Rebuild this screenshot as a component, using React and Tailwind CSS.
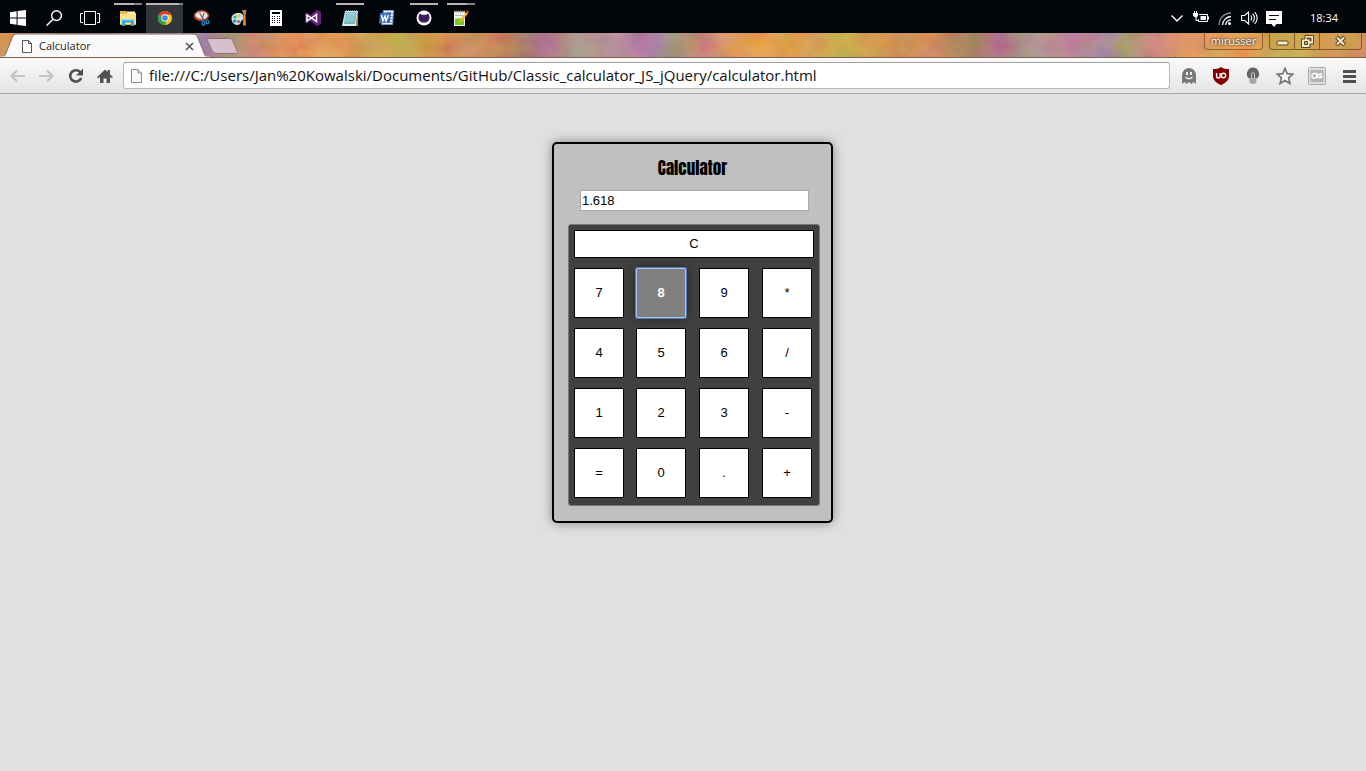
const ui = "font-['Open_Sans','Noto_Sans',sans-serif]";

const Svg = ({ w = 16, h = 16, children, className = '' }) => (
  <svg width={w} height={h} viewBox={`0 0 ${w} ${h}`} className={`shrink-0 ${className}`} aria-hidden="true">{children}</svg>
);

const StartIcon = () => (
  <Svg><path fill="#fff" d="M0 2.3 6.6 1.2V7.5H0zM7.6 1 16 0V7.5H7.6zM0 8.5h6.6v6.3L0 13.8zM7.6 8.5H16V16l-8.4-1.1z" /></Svg>
);
const SearchIcon = () => (
  <Svg><g fill="none" stroke="#fff" strokeWidth="1.4"><circle cx="10.5" cy="5.6" r="4.9" /><path d="M7 9.2.6 15.6" /></g></Svg>
);
const TaskViewIcon = () => (
  <Svg w={20}><g fill="none" stroke="#fff" strokeWidth="1"><path d="M4.500 1.500h11v13h-11zM3 3.500H.5v9H3M17 3.500h2.500v9H17" /></g></Svg>
);
const FolderIcon = () => (
  <Svg>
    <path fill="#e9b949" d="M0 1h6l1.500 2H16v12H0z" />
    <path fill="#fbe08a" d="M0 4h16v10H0z" />
    <path fill="#fdeeb4" d="M7 1.500h8V4H7z" />
    <path fill="#2fa8e0" d="M2 9h12v7h-3v-3.500H5.200V16H2z" />
    <path fill="#8bd8f8" d="M2 9h12v1.500H2z" />
  </Svg>
);
const ChromeIcon = () => (
  <Svg>
    <circle cx="8" cy="8" r="7" fill="#fbc916" />
    <path fill="#e33b2e" d="M8 8 1.900 4.500A7 7 0 0 1 14.200 4.800H8z" />
    <path fill="#2fa24c" d="M8 8 1.900 4.500A7 7 0 0 0 7.500 15L10.800 9.600z" />
    <circle cx="8" cy="8" r="3.700" fill="#f4f4f4" />
    <circle cx="8" cy="8" r="2.800" fill="#4485e8" />
  </Svg>
);
const SnipIcon = () => (
  <Svg>
    <ellipse cx="7.500" cy="5.500" rx="6.800" ry="4.500" fill="#f1eae6" stroke="#c4513a" strokeWidth="1.500" />
    <path d="M5.500 2.500 9.500 10M10 3 8 10" stroke="#666" strokeWidth="1.200" />
    <path d="M1 7q3 3.500 7 3" stroke="#b75236" strokeWidth="2" fill="none" />
    <g fill="none" stroke="#1f87c7" strokeWidth="1.300"><ellipse cx="9.500" cy="13" rx="1.400" ry="2.200" /><ellipse cx="13.400" cy="11.800" rx="1.400" ry="2" /></g>
  </Svg>
);
const PaintIcon = () => (
  <Svg>
    <path fill="#c6dff0" d="M.5 8.500C.5 4.500 4 3 7.500 3S13 5 12.500 8s-2 2-2.500 3.500S9 15 6 15 .5 12 .5 8.500" />
    <circle cx="4" cy="7" r="1.600" fill="#4db13f" /><circle cx="8" cy="5.600" r="1.500" fill="#f0c62c" />
    <circle cx="3.700" cy="11" r="1.600" fill="#2377c9" /><circle cx="7.500" cy="11.500" r="1.500" fill="#d9472b" />
    <path fill="#e9862b" d="M12.500 5h2l.5 10.500h-3z" /><path fill="#b98450" d="M11 0h4.500l-1 5h-2z" />
  </Svg>
);
const CalcIcon = () => (
  <Svg>
    <path fill="#fff" d="M2 0h12v16H2z" />
    <path fill="#05080d" d="M4 2h8v2H4z" />
    {[6, 8, 10, 12].map((y) => [4, 6, 9, 11].map((x) => <rect key={`${x}-${y}`} x={x} y={y} width="1" height="1" fill="#05080d" />))}
  </Svg>
);
const VisualStudioIcon = () => (
  <Svg>
    <path fill="#68217a" d="M11.500 0 16 1.800v12.400L11.500 16 5.500 11 1.800 13.500 0 12.500v-9l1.800-1L5.500 5z" />
    <path fill="none" stroke="#fff" strokeWidth="1.500" d="M2 5 11.500 11.500v-7L2 11z" />
  </Svg>
);
const NotepadIcon = () => (
  <Svg>
    <path fill="#d7eef1" d="M3 1h13l-2 15H0z" /><path fill="#76b9c6" d="M3.500 2h11l-1.500 12H2z" />
    <path fill="#a9dde4" d="M4 3h9l-1.500 9H3z" />
    <path stroke="#5e9dab" strokeWidth=".7" d="M4 5h8.500M3.700 7h8.500M3.400 9h8.500M3.100 11h8.500" />
    <path stroke="#777" d="M4 .5h11" strokeDasharray="1 1" /><path fill="#b08c48" d="M15 4h1v12h-2z" />
  </Svg>
);
const WordIcon = () => (
  <Svg>
    <path fill="#eaf1fb" stroke="#7f9ccc" d="M4.500.5h10l-1 14h-11z" />
    <path stroke="#6a8cc5" d="M11 3.500h3M11 6.500h3M11 9.500h3M7 12.500h6" />
    <path fill="#3d6db8" d="M1 3 12 2l-1 10.500-11 1z" />
    <path d="m2.500 5 1.300 6L6 6l1 5 2.500-6" fill="none" stroke="#fff" strokeWidth="1.400" />
  </Svg>
);
const GithubIcon = () => (
  <Svg>
    <circle cx="8" cy="8" r="7.500" fill="#fff" />
    <path fill="#3b1f5b" d="M3.500 3.500 6 4.800h4l2.500-1.300.8 2.700c.8 4-1.300 6.300-5.300 6.300S1.900 10.200 2.700 6.200z" />
  </Svg>
);
const NotepadPlusIcon = () => (
  <Svg>
    <path fill="#f4f4ee" d="M1 1.500h11V16H1z" /><path fill="#78c927" d="M2 9c3-1 5 0 9-2v8H2z" />
    <path stroke="#999" strokeWidth="2" strokeDasharray="1 1" d="M1 1.500h11" /><path stroke="#b7b7b7" d="M2 5.500h8" />
    <path fill="#f4b52c" d="m13 2 2 1.500-6.500 8L6.500 12.500l.5-2.500z" /><path fill="#d13b28" d="m14 0 2 1.500L15 4l-2-2z" />
  </Svg>
);

const pinned = [
  ['File Explorer', FolderIcon, 'split'],
  ['Google Chrome', ChromeIcon, 'active'],
  ['Snipping Tool', SnipIcon],
  ['Paint', PaintIcon],
  ['Windows Calculator', CalcIcon],
  ['Visual Studio', VisualStudioIcon],
  ['Notepad', NotepadIcon, 'open'],
  ['Word', WordIcon],
  ['GitHub', GithubIcon, 'open'],
  ['Notepad++', NotepadPlusIcon, 'split'],
];

function TaskButton({ name, Icon, state }) {
  return (
    <button aria-label={name} className={`flex h-[30px] w-[37px] flex-col items-center ${state === 'active' ? 'bg-[#32363a]' : ''}`}>
      <span className={`flex h-[2px] ${state === 'active' ? 'w-full' : 'w-7'} ${state ? 'bg-[#b9b5b0]' : ''}`}>
        {state === 'split' && <span className="ml-auto h-full w-2 bg-[#85827f]" />}
        {state === 'active' && <span className="ml-auto h-full w-1 bg-[#85827f]" />}
      </span>
      <span className="mt-[5px]"><Icon /></span>
    </button>
  );
}

function Taskbar() {
  return (
    <header className="flex h-[33px] items-end bg-[#020509]">
      {[['Start', StartIcon], ['Search', SearchIcon], ['Task View', TaskViewIcon]].map(([n, I]) => (
        <button key={n} aria-label={n} className="flex h-[30px] w-9 items-center justify-center"><I /></button>
      ))}
      <nav className="flex pl-px" aria-label="Applications">
        {pinned.map(([name, Icon, state]) => <TaskButton key={name} name={name} Icon={Icon} state={state} />)}
      </nav>
      <div className="ml-auto flex h-[30px] items-center gap-2 pr-7">
        <Svg className="mr-[2px]" w={12}><path d="m.5 5.500 5.500 5.500 5.500-5.500" fill="none" stroke="#fff" strokeWidth="1.400" /></Svg>
        <Svg><path fill="none" stroke="#fff" d="M6 4.500h8.500v7h-9V9" /><path fill="#fff" d="M7.500 6H13v4H7.500zM15 6.500h1v3h-1zM0 3h1V1h1v2h1V1h1v2h1v3L3.500 7.500V10h2v1h-3V7.500L0 6z" /></Svg>
        <Svg><g fill="none" strokeWidth="1.300"><path stroke="#8c8f91" d="M2 15A12 12 0 0 1 14 3" /><path stroke="#fff" d="M5.500 15A9 9 0 0 1 14 6.500M8.500 15A6 6 0 0 1 14 9.800" /></g><circle cx="12.500" cy="13.500" r="1.500" fill="#fff" /></Svg>
        <Svg w={17}><g fill="none" stroke="#fff" strokeWidth="1.100"><path d="M.6 5.500h3l4-3.500v12l-4-3.500h-3zM9.700 5.500q2 2.500 0 5M11.700 3.700q3.500 4.300 0 8.600M13.700 2q5 6 0 12" /></g></Svg>
        <Svg className="mt-px"><path fill="#fff" d="M0 0h16v13h-5.500L8 16l-2.500-3H0z" /><path stroke="#05080d" d="M3 4.500h10M3 8.500h7" /></Svg>
        <time className={`${ui} ml-5 text-[11px] text-white`}>18:34</time>
      </div>
    </header>
  );
}

function TabStrip() {
  return (
    <div className="relative flex h-[25px] items-start overflow-hidden border-b border-[#7a6048] bg-[repeating-linear-gradient(93deg,#cf8a4a_0px,#c97f4c_35px,#9f7250_70px,#a2648a_98px,#9a9382_125px,#b87f90_165px,#9d74a4_205px,#93906f_225px,#c07a72_250px,#e08f4c_285px,#e59a45_320px,#e3943f_345px,#c5a83c_380px,#bfa93a_395px,#cd8f38_425px,#cf8a4a_450px)]">
      <svg className="absolute inset-0 h-6 w-full opacity-30" aria-hidden="true">
        <filter id="grain" x="0" y="0" width="100%" height="100%">
          <feTurbulence type="fractalNoise" baseFrequency="0.035 0.045" numOctaves="5" seed="8" />
          <feColorMatrix values="1.4 0 0 0 0  0 1.2 0 0 -0.1  0 0 1.2 0 -0.2  0 0 0 0 0.7" />
        </filter>
        <rect width="100%" height="100%" filter="url(#grain)" />
      </svg>
      <div className="relative flex h-[25px] w-[208px] items-center">
        <svg className="absolute inset-0" width="240" height="25" viewBox="0 0 240 25" aria-hidden="true">
          <path d="M0 25v-1c4 0 5-1 6-4l6-15c1-3 2-4 5-4h175c4 0 5 1 6 4l6 15c1 3 2 4 6 5z" fill="#fafafa" stroke="#866a62" strokeWidth="1" />
          <path d="M0 24.500h209" stroke="#fafafa" strokeWidth="2" />
          <path d="M209 5.500h20c2 0 3 0 4 3l4 9c1 3 0 3-3 3h-17c-3 0-4-1-5-3l-4-9c-1-2-1-3 1-3z" fill="#d5c0cb" stroke="#927078" />
        </svg>
        <span className="relative flex w-full items-center pt-px pr-[14px] pl-[22px]">
          <Svg w={10} h={13}><path d="M.5.500h6l3 3v9H.5zM6.500.500v3h3" fill="#fff" stroke="#555" /></Svg>
          <span className={`${ui} ml-[7px] text-[11px] text-[#222]`}>Calculator</span>
          <button aria-label="Close tab" className="ml-auto"><Svg w={9} h={9}><path d="m1 1 7 7M8 1 1 8" stroke="#555" strokeWidth="1.600" /></Svg></button>
        </span>
      </div>
      <div className="relative ml-auto flex gap-[6px] pr-1 text-white">
        <button className={`${ui} h-[17px] w-[59px] rounded-b border border-t-0 border-[#935f32] bg-[#f0b060]/20 text-[11px] leading-4 [text-shadow:0_0_2px_#333,0_0_2px_#333]`}>mirusser</button>
        <div className="flex h-[17px] w-[93px] rounded-b border border-t-0 border-[#80592b] bg-[#d9a23d]/25">
          <button aria-label="Minimize" className="flex w-[25px] items-center justify-center border-r border-[#80592b] pt-1"><Svg w={13} h={6}><rect x="1" y="1" width="11" height="4" rx="1" fill="#f3ead0" stroke="#5d4422" /></Svg></button>
          <button aria-label="Restore" className="flex w-[25px] items-center justify-center border-r border-[#80592b]"><Svg w={13} h={13}><path fillRule="evenodd" fill="#f3ead0" stroke="#5d4422" d="M4 .5h8.500V9H9v3.500H.5V4H4zM3.500 6.500v3h3v-3zM6 3v1h3v2h1V3z" /></Svg></button>
          <button aria-label="Close window" className="flex flex-1 items-center justify-center"><Svg w={13} h={12}><path d="m2.500 2 8 8M10.500 2l-8 8" stroke="#5d4422" strokeWidth="4" /><path d="m3 2.500 7 7M10 2.500l-7 7" stroke="#f3ead0" strokeWidth="2" /></Svg></button>
        </div>
      </div>
    </div>
  );
}

function Toolbar() {
  return (
    <div className="relative flex h-9 items-center border-b border-[#a8a8a8] bg-gradient-to-b from-[#fafafa] to-[#e4e4e4] pr-2 pl-[10px]">
      <div className="flex items-center gap-[13px]">
        <button aria-label="Back"><Svg><path d="M7 2.500 1.500 8 7 13.500M2 8h13" fill="none" stroke="#c3c3c3" strokeWidth="2.200" /></Svg></button>
        <button aria-label="Forward"><Svg><path d="m8 2.500 5.500 5.500L8 13.500M13 8H0" fill="none" stroke="#c3c3c3" strokeWidth="2.200" /></Svg></button>
        <button aria-label="Reload"><Svg><path d="M12.500 4.500A5.700 5.700 0 1 0 13.200 10" fill="none" stroke="#505050" strokeWidth="2.600" /><path d="M15 .5v7H8z" fill="#505050" /></Svg></button>
        <button aria-label="Home"><Svg><path fill="#505050" d="M8 1.500 0 9.300l1.200 1L3 8.800V15h3.500v-4.500h3V15H13V8.800l1.800 1.500 1.200-1-3-3V2h-2.500v2z" /></Svg></button>
      </div>
      <label className="mr-[10px] ml-[10px] flex h-[27px] min-w-0 flex-1 items-center rounded-[3px] border border-[#b8b8b8] border-t-[#a0a0a0] bg-white pl-[7px]">
        <Svg w={11} h={14}><path d="M.5.500h6.500l3.500 3.500v9.500H.5zM7 .5V4h3.500" fill="#fafafa" stroke="#8a8a8a" /></Svg>
        <input aria-label="Address" className={`${ui} ml-[7px] min-w-0 flex-1 bg-transparent pb-[2px] text-[15px] leading-5 text-[#111] outline-none`} defaultValue="file:///C:/Users/Jan%20Kowalski/Documents/GitHub/Classic_calculator_JS_jQuery/calculator.html" />
      </label>
      <div className="flex items-center gap-[14px]">
        <button aria-label="Ghostery"><Svg w={18} h={18}><path fill="#77787c" d="M2 17V8a7 7 0 0 1 14 0v9l-2.500-2-2 2L9 15l-2.500 2-2-2z" /><path fill="#f2f2f2" d="M6 5h2v3H6zM10 5h2v3h-2z" /><path d="M5.500 10q3.500 3.500 7 0" fill="none" stroke="#f2f2f2" strokeWidth="1.200" /></Svg></button>
        <button aria-label="uBlock Origin"><Svg w={18} h={18}><path fill="#800000" d="M9 0c3 2 5 2 8 2v7c0 4-3 7-8 9-5-2-8-5-8-9V2c3 0 5 0 8-2" /><path d="M4.600 6v3.500q0 1.500 1.800 1.500t1.800-1.500V6" fill="none" stroke="#fff" strokeWidth="1.400" /><circle cx="11.500" cy="8.500" r="2.200" fill="none" stroke="#fff" strokeWidth="1.400" /></Svg></button>
        <button aria-label="Turn off the lights"><Svg w={18} h={18}><path fill="#666" d="M9 .5a6.300 6.300 0 0 1 4 11H5a6.300 6.300 0 0 1 4-11" /><path fill="none" stroke="#ccc" strokeWidth="1" d="M7.500 12V6.500q1.500-2 3 0V12" /><path fill="#a5a5a5" d="M5.500 12h7v3.500l-2 1.500h-3l-2-1.500z" /></Svg></button>
        <button aria-label="Bookmark"><Svg w={18} h={18}><path d="m9 1.500 2.200 5.200 5.600.5-4.200 3.700 1.300 5.600L9 13.500l-4.900 3 1.300-5.600-4.200-3.700 5.600-.5z" fill="#f8f8f8" stroke="#757575" strokeWidth="1.700" /></Svg></button>
        <button aria-label="Last.fm scrobbler"><Svg w={18} h={18}><rect x=".5" y=".5" width="17" height="17" rx="1" fill="#ddd" stroke="#aaa" /><path fill="#b4b4b4" d="M2.500 3h13v12h-13z" /><path d="M9 6.800Q4 5.500 4 9t4.500 1.700L9 6.500q.5 4.500 3 4.300 2.500-.3 1.500-1.600c-.8-.7-2.500-.4-2.500-1.500q.5-1.500 3-.7" fill="none" stroke="#fff" strokeWidth="1.400" /></Svg></button>
        <button aria-label="Menu"><Svg w={18} h={18}><path stroke="#505050" strokeWidth="2.800" d="M3 4.500h13M3 9.500h13M3 14.500h13" /></Svg></button>
      </div>
    </div>
  );
}

const keys = ['7', '8', '9', '*', '4', '5', '6', '/', '1', '2', '3', '-', '=', '0', '.', '+'];

function Calculator() {
  return (
    <main className="flex justify-center pt-12 pl-[19px] font-['Liberation_Sans',sans-serif] text-[13px]">
      <section className="flex w-[281px] flex-col rounded-[5px] border-2 border-black bg-[#c0c0c0] px-[14px] pb-[15px] shadow-[0_0_12px_rgba(0,0,0,0.4)]">
        <h1 className="mt-3 text-center font-['Impact','Anton','Roboto_Condensed','Roboto',sans-serif] text-[17px] leading-6 font-normal text-black">Calculator</h1>
        <input aria-label="Result" defaultValue="1.618" className="mx-3 mt-[10px] h-[21px] w-[229px] border border-[#a9a9a9] bg-white px-px leading-4 text-black" />
        <div className="mt-[13px] w-[252px] rounded-[3px] border border-[#777] bg-[#404040] p-[5px] pb-[7px]">
          <button className="mb-[10px] h-7 w-full border border-black bg-white text-black">C</button>
          <div className="grid grid-cols-[62px_63px_63px_50px] gap-y-[10px]">
            {keys.map((k) => (
              <button
                key={k}
                className={`size-[50px] border ${k === '8' ? 'rounded-[1px] border-[#a9c6fa] bg-[#808080] font-bold text-white shadow-[0_0_10px_rgba(0,0,0,0.5)] outline-1 outline-[#4f78bd]' : 'border-black bg-white text-black'}`}
              >
                {k}
              </button>
            ))}
          </div>
        </div>
      </section>
    </main>
  );
}

export default function App() {
  return (
    <div className="flex min-h-screen flex-col bg-[#e0e0e0]">
      <Taskbar />
      <TabStrip />
      <Toolbar />
      <Calculator />
    </div>
  );
}
